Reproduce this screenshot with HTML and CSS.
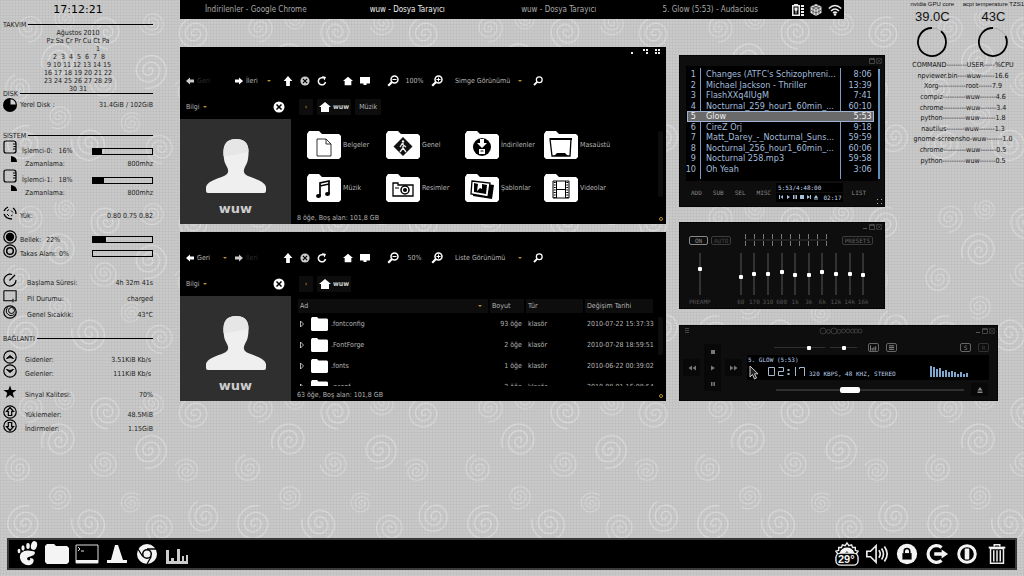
FILE: index.html
```html
<!DOCTYPE html>
<html lang="tr">
<head>
<meta charset="utf-8">
<title>Masaüstü</title>
<link rel="stylesheet" href="styles.css">
</head>
<body>
<svg class="defs" aria-hidden="true">
  <symbol id="arrow" viewBox="0 0 8 8"><path d="M0 4 4 0.500V2.500H8V5.500H4V7.500Z"/></symbol>
  <symbol id="up" viewBox="0 0 8 8"><path d="M4 0 7.500 4H5.500V8H2.500V4H0.500Z"/></symbol>
  <symbol id="close" viewBox="0 0 12 12"><circle cx="6" cy="6" r="5.500"/><path d="M3.500 3.500 8.500 8.500M8.500 3.500 3.500 8.500" stroke="#000" stroke-width="1.500"/></symbol>
  <symbol id="reload" viewBox="0 0 10 10"><path d="M8.500 6A3.600 3.600 0 1 1 6 1.800" fill="none" stroke="currentColor" stroke-width="1.500"/><path d="M5 0 9 1 7.500 4.500Z"/></symbol>
  <symbol id="home" viewBox="0 0 12 10"><path d="M6 0 12 5H10V10H2V5H0Z"/></symbol>
  <symbol id="screen" viewBox="0 0 10 9"><path d="M0 0.500H10V7H6.500V8.500H3.500V7H0Z"/></symbol>
  <symbol id="lens" viewBox="0 0 12 12"><circle cx="7.500" cy="4.500" r="3.500" fill="none" stroke="currentColor" stroke-width="1.500"/><path d="M5 7 1.200 10.800" stroke="currentColor" stroke-width="2.200"/></symbol>
  <symbol id="minus" viewBox="0 0 12 12"><use href="#lens"/><path d="M5.500 4H9.500V5H5.500Z"/></symbol>
  <symbol id="plus" viewBox="0 0 12 12"><use href="#lens"/><path d="M5.500 4H9.500V5H5.500ZM7 2.500H8V6.500H7Z"/></symbol>
  <symbol id="folder" viewBox="0 0 34 28"><path d="M0 3 2 0H12L15 3H32L34 5V26L32 28H2L0 26Z"/></symbol>
  <symbol id="user" viewBox="0 0 60 54"><path d="M30 0C40 0 43 6 42.500 15C42 23 41 24 38.500 29C37 33 38 35 42 37C50 40 59 43 60 48V52Q60 54 58 54H2Q0 54 0 52V48C1 43 10 40 18 37C22 35 23 33 21.500 29C19 24 18 23 17.500 15C17 6 20 0 30 0Z" fill="#efefef"/><path d="M17.500 17C26 17 34 14 42.500 13C43 4 38 0 30 0S16.500 5 17.500 17Z" fill="#e6e6e6"/></symbol>
  <symbol id="cpu" viewBox="0 0 15 23"><path d="M2.500 1H10.500Q13 1 13 3.500V11Q13 13 10.500 13H3Q1 13 1 11V3Q1 1 3 1Z" fill="none" stroke="#000" stroke-width="1.200"/><path d="M10 4H13M10.500 6.500H13M10 9H13" stroke="#000"/><path d="M8 16Q14 17 14 22H8Z"/></symbol>
  <symbol id="ring" viewBox="0 0 14 14"><circle cx="7" cy="7" r="6.200" fill="none" stroke="#000" stroke-width="1.200"/></symbol>
  <symbol id="min" viewBox="0 0 6 6"><path d="M1 4.500H5" fill="none" stroke="#555"/></symbol>
  <symbol id="max" viewBox="0 0 6 6"><path d="M.5 .5H5.500V5.500H.5ZM.5 1.500H5.500" fill="none" stroke="#444"/></symbol>
  <symbol id="x" viewBox="0 0 6 6"><path d="M.5 .5H5.500V5.500H.5ZM1 1 5 5M5 1 1 5" fill="none" stroke="#3c3c3c" stroke-width=".8"/></symbol>
</svg>

<svg class="wallpaper" aria-hidden="true">
  <defs>
    <g id="swirl"><path d="M0 0a2 2 0 0 1 4 0a4 4 0 0 1-8 0a6.500 6.500 0 0 1 13 0a9 9 0 0 1-18 0a11.500 11.500 0 0 1 23 0a14 14 0 0 1-14 14"/></g>
    <pattern id="swirls" width="230" height="190" patternUnits="userSpaceOnUse">
      <g fill="none" stroke="#d9d9d9" stroke-width="1.200">
        <use href="#swirl" transform="translate(28 28)"/>
        <use href="#swirl" transform="translate(66 18) rotate(120) scale(.8)"/>
        <use href="#swirl" transform="translate(108 32) scale(-1.200 1.200)"/>
        <use href="#swirl" transform="translate(152 22) rotate(70) scale(.9)"/>
        <use href="#swirl" transform="translate(196 34) rotate(200) scale(1.200)"/>
        <use href="#swirl" transform="translate(60 62) rotate(250) scale(1.300 -1.300)"/>
        <use href="#swirl" transform="translate(20 88) rotate(160)"/>
        <use href="#swirl" transform="translate(104 82) rotate(80)"/>
        <use href="#swirl" transform="translate(148 70) rotate(10) scale(1.300)"/>
        <use href="#swirl" transform="translate(186 92) rotate(300) scale(.9 -.9)"/>
        <use href="#swirl" transform="translate(58 116) rotate(30) scale(.9)"/>
        <use href="#swirl" transform="translate(26 144) rotate(190) scale(1.300)"/>
        <use href="#swirl" transform="translate(90 142) rotate(100) scale(1.300)"/>
        <use href="#swirl" transform="translate(132 124) rotate(220) scale(.8)"/>
        <use href="#swirl" transform="translate(162 148) scale(-1.100 1.100)"/>
        <use href="#swirl" transform="translate(206 136) rotate(150) scale(1.200)"/>
      </g>
    </pattern>
    <pattern id="mesh" width="3" height="3" patternUnits="userSpaceOnUse"><path d="M0 .5H3M.5 0V3" stroke="#000" stroke-opacity=".03"/></pattern>
  </defs>
  <rect width="100%" height="100%" fill="url(#swirls)"/>
  <rect width="100%" height="100%" fill="url(#mesh)"/>
</svg>

<div class="desktop">
<aside class="system">
  <time class="clock">17:12:21</time>
  <h2>TAKVIM</h2>
  <div class="calendar">
    <span>Ağustos 2010</span><span>Pz Sa Çr Pr Cu Ct Pa</span><span>                    1</span><span> 2  3  4  5  6  7  8</span><span> 9 10 11 12 13 14 15</span><span>16 17 18 19 20 21 22</span><span>23 24 25 26 27 28 29</span><span>30 31</span>
  </div>
  <h2>DISK</h2>
  <div class="stat disk"><svg viewBox="0 0 14 14"><circle cx="7" cy="7" r="7"/><path d="M7.500 1.200A6 6 0 0 1 12.800 6.500H7.500Z" fill="#d0d0d0"/></svg><span>Yerel Disk :</span><b>31.4GiB / 102GiB</b></div>
  <h2>SISTEM</h2>
  <div class="cpu"><svg><use href="#cpu"/></svg><div><p><label for="c0">İşlemci-0:</label><i>16%</i><progress id="c0" max="100" value="16"></progress></p><p class="inset"><span>Zamanlama:</span><b>800mhz</b></p></div></div>
  <div class="cpu"><svg><use href="#cpu"/></svg><div><p><label for="c1">İşlemci-1:</label><i>18%</i><progress id="c1" max="100" value="18"></progress></p><p class="inset"><span>Zamanlama:</span><b>800mhz</b></p></div></div>
  <div class="stat load"><svg viewBox="0 0 14 14"><path d="M1 5A7 7 0 0 1 5 1M1 8Q3 13 9 13M10 2Q13 4 13 8" fill="none" stroke="#000" stroke-width="1.300"/><path d="M4 5 6 3.500M4 8 6 10M8 4.500 10 6.500M9.500 9 8 10" stroke="#000"/></svg><span>Yük:</span><b>0.80 0.75 0.82</b></div>
  <div class="stat memory"><svg viewBox="0 0 14 14"><use href="#ring"/><circle cx="7" cy="7" r="4.200"/></svg><label for="ram">Bellek:</label><i>22%</i><progress id="ram" max="100" value="22"></progress></div>
  <div class="stat"><svg viewBox="0 0 14 14"><use href="#ring"/><circle cx="7" cy="7" r="3.300" fill="none" stroke="#000" stroke-width="1.500"/></svg><label for="swap">Takas Alanı: 0%</label><progress id="swap" max="100" value="0"></progress></div>
  <div class="stat uptime far"><svg viewBox="0 0 14 14"><path d="M9 1.500A6 6 0 1 0 13 7M6.500 7.500 12 2" fill="none" stroke="#000" stroke-width="1.200"/></svg><span>Başlama Süresi:</span><b>4h 32m 41s</b></div>
  <div class="stat power far"><svg viewBox="0 0 16 14"><path d="M1 1H15V12.500H13M1 1V12.500H11M11.500 10V14" fill="none" stroke="#000" stroke-width="1.200"/></svg><span>Pil Durumu:</span><b>charged</b></div>
  <div class="stat power far"><svg viewBox="0 0 14 14"><use href="#ring"/><circle cx="8.500" cy="5.500" r="3" fill="none" stroke="#000"/><path d="M4.500 2.500Q1 8 7 10.500Q10 11 11.500 9" fill="none" stroke="#000"/></svg><span>Genel Sıcaklık:</span><b>43°C</b></div>
  <h2>BAĞLANTI</h2>
  <div class="stat net mid"><svg viewBox="0 0 14 14"><use href="#ring"/><path d="M3.500 8.500 7 5.500 10.500 8.500 7 7.500Z" stroke="#000"/></svg><span>Gidenler:</span><b>3.51KiB Kb/s </b></div>
  <div class="stat mid"><svg viewBox="0 0 14 14"><use href="#ring"/><path d="M3.500 5.500 7 8.500 10.500 5.500 7 6.500Z" stroke="#000"/></svg><span>Gelenler:</span><b>111KiB Kb/s </b></div>
  <div class="stat net mid"><svg viewBox="0 0 14 14"><path d="M7 0.500 8.700 5H13.500L9.700 8 11.200 13 7 10 2.800 13 4.300 8 0.500 5H5.300Z"/></svg><span>Sinyal Kalitesi:</span><b>70%</b></div>
  <div class="stat total mid"><svg viewBox="0 0 14 14"><use href="#ring"/><path d="M7 2.500 10.500 6.500H8.700V10.500H5.300V6.500H3.500Z" fill="none" stroke="#000" stroke-width="1.200"/></svg><span>Yüklemeler:</span><b>48.5MiB</b></div>
  <div class="stat mid"><svg viewBox="0 0 14 14"><use href="#ring"/><path d="M7 11.500 10.500 7.500H8.700V3.500H5.300V7.500H3.500Z" fill="none" stroke="#000" stroke-width="1.200"/></svg><span>İndirmeler:</span><b>1.15GiB</b></div>
</aside>

<header class="taskbar">
  <nav><button>İndirilenler - Google Chrome</button><button class="active">wuw - Dosya Tarayıcı</button><button>wuw - Dosya Tarayıcı</button><button>5. Glow (5:53) - Audacious</button></nav>
  <div class="tray">
    <svg viewBox="0 0 12 12"><path d="M0 1H2V0H6V1H8V12H0ZM9 1H12V3H9ZM9 4H12V6H9ZM9 7H12V9H9ZM9 10H12V12H9Z" fill="#eee"/><path d="M1.500 2.500H6.500V10.500H1.500Z" fill="#000"/><path d="M2.500 3.500H5.500V6L4.500 7V9.500H3.500V7L2.500 6Z" fill="#eee"/></svg>
    <svg viewBox="0 0 12 12"><path d="M6 0 11.500 2.500V9L6 12 .5 9V2.500Z" fill="#ddd"/><path d="M.5 2.500 6 5.500 11.500 2.500M6 5.500V12M3 1.500 9 4V10M9 1.500 3 4V10M.5 6 6 9 11.500 6" fill="none" stroke="#000" stroke-width=".5"/></svg>
    <svg class="wifi" viewBox="0 0 14 12"><path d="M.8 4.500Q7-1.500 13.200 4.500M3 7Q7 3 11 7M5 9Q7 7.200 9 9" fill="none" stroke="#eee" stroke-width="1.500"/><circle cx="7" cy="10.500" r="1.300" fill="#eee"/></svg>
  </div>
</header>

<aside class="monitor">
  <div class="gauges">
    <div><span>nvidia GPU core</span><strong>39.0C</strong><svg viewBox="0 0 30 30"><circle cx="15" cy="15" r="14" fill="none" stroke="#aaa"/><path d="M24 4.300A14 14 0 1 1 15 1" fill="none" stroke="#000" stroke-width="1.800"/></svg></div>
    <div><span>acpi temperature TZS1</span><strong>43C</strong><svg viewBox="0 0 30 30"><circle cx="15" cy="15" r="14" fill="none" stroke="#aaa"/><path d="M27.500 9A14 14 0 1 1 15 1" fill="none" stroke="#000" stroke-width="1.800"/></svg></div>
  </div>
  <div class="processes"><span>COMMAND---------USER-----%CPU</span><span>npviewer.bin----wuw------16.6</span><span>Xorg------------root------7.9</span><span>compiz----------wuw-------4.6</span><span>chrome----------wuw-------3.4</span><span>python----------wuw-------1.8</span><span>nautilus--------wuw-------1.3</span><span>gnome-screensho-wuw-------1.0</span><span>chrome----------wuw-------0.5</span><span>python----------wuw-------0.5</span></div>
</aside>

<section class="files files-icons">
  <div class="caption"><svg viewBox="0 0 30 6"><path d="M1 3H3V5H1ZM13 0H15V2H13ZM16 0H18V2H16ZM16 3H18V5H16ZM25 0H27V2H25ZM28 0H30V2H28ZM25 3H27V5H25ZM28 3H30V5H28Z" fill="#eee"/></svg></div>
  <div class="toolbar">
    <button class="nav" disabled><svg><use href="#arrow"/></svg>Geri</button>
    <button class="nav forward"><svg><use href="#arrow"/></svg>İleri<span class="caret"></span></button>
    <button class="tool" aria-label="Yukarı"><svg><use href="#up"/></svg></button><button class="tool dim" aria-label="Durdur"><svg><use href="#close"/></svg></button><button class="tool" aria-label="Yenile"><svg><use href="#reload"/></svg></button>
    <button class="tool split" aria-label="Ev"><svg><use href="#home"/></svg></button><button class="tool" aria-label="Bilgisayar"><svg><use href="#screen"/></svg></button>
    <button class="tool zoom split" aria-label="Uzaklaş"><svg><use href="#minus"/></svg></button><span class="percent">100%</span><button class="tool zoom" aria-label="Yakınlaş"><svg><use href="#plus"/></svg></button>
    <span class="view"><select aria-label="Görünüm"><option>Simge Görünümü</option></select><span class="caret"></span></span>
    <button class="tool" aria-label="Ara"><svg><use href="#lens"/></svg></button>
  </div>
  <div class="panes">
    <aside class="info"><div class="pane-bar"><button>Bilgi<span class="caret"></span></button><button class="shut" aria-label="Kapat"><svg><use href="#close"/></svg></button></div><div class="profile"><svg><use href="#user"/></svg><strong>wuw</strong></div></aside>
    <main>
      <div class="path"><button class="prev">‹</button><button class="place"><svg><use href="#home"/></svg><b>wuw</b></button><button>Müzik</button></div>
      <div class="folders">
        <a href="#belgeler"><svg viewBox="0 0 34 28"><use href="#folder"/><path d="M10 8H19L24 13V25H10ZM19 8V13H24" fill="none" stroke="#000" stroke-width=".8"/></svg>Belgeler</a>
        <a href="#genel"><svg viewBox="0 0 34 28"><use href="#folder"/><path d="M17 6 26.500 15.500 17 25 7.500 15.500Z" fill="#111"/><circle cx="17" cy="10.500" r="1.200" fill="#eee"/><path d="M17 12V17L14 21M17 17 20 21M14 16 16 13 20 16" fill="none" stroke="#eee" stroke-width="1.300"/></svg>Genel</a>
        <a href="#indirilenler"><svg viewBox="0 0 34 28"><use href="#folder"/><circle cx="17" cy="16" r="9" fill="#000"/><path d="M15 8H19V12H22L17 17 12 12H15Z" fill="#fff"/><path d="M14 18H20V23H14Z" fill="#fff"/><path d="M15.500 20H18.500" stroke="#000"/></svg>İndirilenler</a>
        <a href="#masaustu"><svg viewBox="0 0 34 28"><use href="#folder"/><path d="M6 8H27L26 25H8Z" fill="none" stroke="#000" stroke-width="1.300"/><path d="M6 7H28V9H6ZM10 25 13 22H21L24 25Z"/></svg>Masaüstü</a>
        <a href="#muzik"><svg viewBox="0 0 34 28"><use href="#folder"/><path d="M13 22V9L22 7V20M13 12 22 10" fill="none" stroke="#000" stroke-width="1.700"/><ellipse cx="11.500" cy="22" rx="2.500" ry="2"/><ellipse cx="20.500" cy="20" rx="2.500" ry="2"/></svg>Müzik</a>
        <a href="#resimler"><svg viewBox="0 0 34 28"><use href="#folder"/><path d="M7 11V9H12V11H27V22H7Z" fill="none" stroke="#000" stroke-width="1.300"/><circle cx="19" cy="16" r="4" fill="none" stroke="#000" stroke-width="1.500"/><circle cx="19" cy="16" r="2"/><path d="M9 14H13" stroke="#000"/></svg>Resimler</a>
        <a href="#sablonlar"><svg viewBox="0 0 34 28"><use href="#folder"/><path d="M9 8 29 11 27 25 8 22Z"/><path d="M7 7 25 9 23 23 6 20Z" fill="#fff" stroke="#000" stroke-width="1.300"/><path d="M9 9 13 10 12 17 15 14 17 15V10L22 11 21 20 9 18Z"/></svg>Şablonlar</a>
        <a href="#videolar"><svg viewBox="0 0 34 28"><use href="#folder"/><path d="M9 7H25V24H9ZM12.500 7V24M21.500 7V24M12.500 15.500H21.500" fill="none" stroke="#000"/><path d="M10.700 8V24M23.300 8V24" stroke="#000" stroke-width="2" stroke-dasharray="1 1.500"/></svg>Videolar</a>
        <span class="scroll"></span>
      </div>
      <footer>8 öğe, Boş alan: 101,8 GB<i></i></footer>
    </main>
  </div>
</section>

<section class="files files-list">
  <div class="caption"></div>
  <div class="toolbar">
    <button class="nav"><svg><use href="#arrow"/></svg>Geri<span class="caret"></span></button>
    <button class="nav forward" disabled><svg><use href="#arrow"/></svg>İleri</button>
    <button class="tool" aria-label="Yukarı"><svg><use href="#up"/></svg></button><button class="tool dim" aria-label="Durdur"><svg><use href="#close"/></svg></button><button class="tool" aria-label="Yenile"><svg><use href="#reload"/></svg></button>
    <button class="tool split" aria-label="Ev"><svg><use href="#home"/></svg></button><button class="tool" aria-label="Bilgisayar"><svg><use href="#screen"/></svg></button>
    <button class="tool zoom split" aria-label="Uzaklaş"><svg><use href="#minus"/></svg></button><span class="percent">50%</span><button class="tool zoom" aria-label="Yakınlaş"><svg><use href="#plus"/></svg></button>
    <span class="view"><select aria-label="Görünüm"><option>Liste Görünümü</option></select><span class="caret"></span></span>
    <button class="tool" aria-label="Ara"><svg><use href="#lens"/></svg></button>
  </div>
  <div class="panes">
    <aside class="info"><div class="pane-bar"><button>Bilgi<span class="caret"></span></button><button class="shut" aria-label="Kapat"><svg><use href="#close"/></svg></button></div><div class="profile"><svg><use href="#user"/></svg><strong>wuw</strong></div></aside>
    <main>
      <div class="path"><button class="prev">‹</button><button class="place"><svg><use href="#home"/></svg><b>wuw</b></button></div>
      <div class="list">
        <table>
          <thead><tr><th class="name">Ad<span class="caret"></span></th><th class="size">Boyut</th><th class="kind">Tür</th><th>Değişim Tarihi</th></tr></thead>
          <tbody>
            <tr><td><div class="entry"><svg class="twist" viewBox="0 0 4 8"><path d="M.5 1V7L3.500 4Z" fill="none" stroke="#ddd" stroke-width=".8"/></svg><svg><use href="#folder"/></svg>.fontconfig</div></td><td class="num">93 öğe</td><td>klasör</td><td>2010-07-22 15:37:33</td></tr>
            <tr><td><div class="entry"><svg class="twist" viewBox="0 0 4 8"><path d="M.5 1V7L3.500 4Z" fill="none" stroke="#ddd" stroke-width=".8"/></svg><svg><use href="#folder"/></svg>.FontForge</div></td><td class="num">2 öğe</td><td>klasör</td><td>2010-07-28 18:59:51</td></tr>
            <tr><td><div class="entry"><svg class="twist" viewBox="0 0 4 8"><path d="M.5 1V7L3.500 4Z" fill="none" stroke="#ddd" stroke-width=".8"/></svg><svg><use href="#folder"/></svg>.fonts</div></td><td class="num">1 öğe</td><td>klasör</td><td>2010-06-22 00:39:02</td></tr>
            <tr><td><div class="entry"><svg class="twist" viewBox="0 0 4 8"><path d="M.5 1V7L3.500 4Z" fill="none" stroke="#ddd" stroke-width=".8"/></svg><svg><use href="#folder"/></svg>.gconf</div></td><td class="num">2 öğe</td><td>klasör</td><td>2010-08-01 16:08:54</td></tr>
          </tbody>
        </table>
        <span class="scroll"></span>
      </div>
      <footer>63 öğe, Boş alan: 101,8 GB<i></i></footer>
    </main>
  </div>
</section>

<section class="skin playlist">
  <div class="skin-bar"><svg><use href="#max"/></svg><svg><use href="#x"/></svg></div>
  <div class="tracks">
    <ol>
      <li><i>1</i><span>Changes (ATFC's Schizophreni...</span><b>8:06</b></li>
      <li><i>2</i><span>Michael Jackson - Thriller</span><b>13:39</b></li>
      <li><i>3</i><span>FlashXXq4lUgM</span><b>7:41</b></li>
      <li><i>4</i><span>Nocturnal_259_hour1_60min_...</span><b>60:10</b></li>
      <li class="playing"><i>5</i><span>Glow</span><b>5:53</b></li>
      <li><i>6</i><span>CireZ Orj</span><b>9:18</b></li>
      <li><i>7</i><span>Matt_Darey_-_Nocturnal_Suns...</span><b>59:59</b></li>
      <li><i>8</i><span>Nocturnal_256_hour1_60min_...</span><b>60:06</b></li>
      <li><i>9</i><span>Nocturnal 258.mp3</span><b>59:58</b></li>
      <li><i>10</i><span>Oh Yeah</span><b>3:06</b></li>
    </ol>
    <div class="track-scroll"></div>
  </div>
  <div class="commands">
    <button>ADD</button><button>SUB</button><button>SEL</button><button>MISC</button>
    <div class="totals"><span>5:53/4:48:00</span><span><svg viewBox="0 0 42 6"><path d="M1 1H2V5H1ZM5 1V5L2.500 3ZM9 1 12 3 9 5ZM15 1H16.500V5H15ZM17.500 1H19V5H17.500ZM22 1H26V5H22ZM29 1 32 3 29 5ZM32 1H33V5H32ZM36 4 38 1 40 4ZM36 4.500H40V5.500H36Z" fill="#a8bfdc"/></svg>02:17</span></div>
    <button class="list-button">LIST</button>
  </div>
  <svg class="grip" viewBox="0 0 6 6"><path d="M0 0H1V1H0ZM4 0H5V1H4ZM0 4H1V5H0ZM4 4H5V5H4Z" fill="#aaa"/></svg>
</section>

<section class="skin equalizer">
  <div class="skin-bar"><svg><use href="#min"/></svg><svg><use href="#max"/></svg><svg><use href="#x"/></svg></div>
  <div class="eq-top"><button class="lit">ON</button><button>AUTO</button><svg viewBox="0 0 84 12"><path d="M1 6H83" stroke="#333"/><path d="M1.500 0V5M10.500 0V5M19.500 0V5M28.500 0V5M37.500 0V5M46.500 0V5M55.500 0V5M64.500 0V5M73.500 0V5M82.500 0V5M1.500 7V12M10.500 7V12M19.500 7V12M28.500 7V12M37.500 7V12M46.500 7V12M55.500 7V12M64.500 7V12M73.500 7V12M82.500 7V12" stroke="#777"/></svg><button class="presets">PRESETS</button></div>
  <div class="bands">
    <label class="preamp"><input type="range" value="63">PREAMP</label>
    <div><label><input type="range" value="43">60</label><label><input type="range" value="50">170</label><label><input type="range" value="50">310</label><label><input type="range" value="55">600</label><label><input type="range" value="47">1k</label><label><input type="range" value="47">3k</label><label><input type="range" value="55">6k</label><label><input type="range" value="50">12k</label><label><input type="range" value="50">14k</label><label><input type="range" value="47">16k</label></div>
  </div>
</section>

<section class="skin player">
  <div class="player-bar"><svg viewBox="0 0 6 6"><path d="M1 1.500H5M1 3.500H5M1 5.500H5" stroke="#444"/></svg><svg class="brand" viewBox="0 0 44 8"><g fill="none" stroke="#444" stroke-width=".8"><circle cx="4" cy="4" r="3"/><circle cx="9.500" cy="4.500" r="2"/><circle cx="15" cy="4" r="3"/><circle cx="20" cy="4.500" r="2"/><circle cx="24.500" cy="4" r="2"/><circle cx="29" cy="4" r="2"/><circle cx="33.500" cy="4" r="2"/><circle cx="37" cy="4" r="2"/><circle cx="41" cy="4" r="2"/></g></svg><div class="skin-bar"><svg><use href="#min"/></svg><svg><use href="#max"/></svg><svg><use href="#x"/></svg></div></div>
  <div class="player-body">
    <div class="pad">
      <button class="stop" aria-label="Dur"><svg viewBox="0 0 8 6"><path d="M2 1H6V5H2Z"/></svg></button>
      <button class="back" aria-label="Önceki"><svg viewBox="0 0 8 6"><path d="M4 0.500V5.500L.5 3ZM8 .5V5.500L4.500 3Z"/></svg></button>
      <button class="play" aria-label="Çal"><svg viewBox="0 0 8 6"><path d="M2 .5 6 3 2 5.500Z"/></svg></button>
      <button class="next" aria-label="Sonraki"><svg viewBox="0 0 8 6"><path d="M0 .5 3.500 3 0 5.500ZM4 .5 7.500 3 4 5.500Z"/></svg></button>
      <button class="pause" aria-label="Duraklat"><svg viewBox="0 0 8 6"><path d="M2 1H3.500V5H2ZM4.500 1H6V5H4.500Z"/></svg></button>
    </div>
    <div class="deck">
      <div class="levels"><input class="volume" type="range" value="71" aria-label="Ses"><input class="balance" type="range" value="50" aria-label="Denge"><button aria-label="EQ"><svg viewBox="0 0 8 6"><path d="M.5 0V6M2.500 3V6M4.500 2V6M6.500 1V6" stroke="#999"/></svg></button><button aria-label="Liste"><svg viewBox="0 0 8 6"><path d="M1 .5H7M1 2.500H7M1 4.500H7" stroke="#999"/></svg></button><button class="shuffle">S</button><button class="repeat">R</button></div>
      <div class="display"><span class="song">5. GLOW (5:53)</span><div><svg class="elapsed" role="img" aria-label="02:17" viewBox="0 0 39 11"><g fill="none" stroke="#a9b9cc"><path d="M1.500 1.500H7.500V9.500H1.500ZM11.500 1.500H16.500V5.500H11.500V9.500H16.500M28.500 1V10M32.500 3V1.500H37.500V10"/><path d="M21.500 3V5M21.500 7V9" stroke-width="2"/></g></svg><span class="rate">320 KBPS, 48 KHZ, STEREO</span><svg class="spectrum" viewBox="0 0 40 11"><path d="M0 11V0H2V11ZM3 11V1H5V11ZM6 11V3H8V11ZM9 11V2H11V11ZM12 11V5H14V11ZM15 11V4H17V11ZM18 11V6H20V11ZM21 11V5H23V11ZM24 11V6H26V11ZM27 11V8H29V11ZM30 11V6H32V11ZM33 11V8H35V11ZM36 11V7H38V11Z" fill="#7fa6cf"/></svg></div></div>
      <div class="seek"><input type="range" value="38" aria-label="Konum"><button aria-label="Çıkar"><svg viewBox="0 0 8 6"><path d="M1.500 3.500 4 0 6.500 3.500ZM1.500 4.500H6.500V6H1.500Z"/></svg></button></div>
    </div>
  </div>
</section>
<svg class="cursor" viewBox="0 0 10 15"><path d="M1 1V12L3.500 9.500 5.500 14 7.500 13 5.500 8.800H9Z" fill="#222" stroke="#ccc"/></svg>

<nav class="dock">
  <a href="#menu" aria-label="Menü"><svg viewBox="0 0 24 26"><path d="M17 10C10 8 4 11 5 17C6 23 13 26 17 23C20 20 19 17 15 17C16 20 13 20 12 18C12 15 19 16 20 12Q20 10 17 10Z"/><ellipse cx="19" cy="4.500" rx="3" ry="4.500" transform="rotate(15 19 4.500)"/><ellipse cx="13" cy="5" rx="1.800" ry="3"/><ellipse cx="8" cy="7" rx="1.600" ry="2.700"/><ellipse cx="4" cy="10" rx="1.400" ry="2.200"/></svg></a>
  <a href="#home-folder" aria-label="Ev"><svg viewBox="0 0 24 26"><path d="M0 5 2 3H9L11 5H22L24 7V21L22 23H2L0 21Z"/></svg></a>
  <a href="#terminal" aria-label="Uçbirim"><svg viewBox="0 0 24 26"><path d="M1 4H23V22H1Z" fill="#000" stroke="#ddd"/><path d="M1 19H23V22H1Z"/><path d="M3 6 5 8 3 10M6 10H9" fill="none" stroke="#ddd"/></svg></a>
  <a href="#cone" aria-label="Oynatıcı"><svg viewBox="0 0 24 26"><path d="M10 4H13L18 19H22V22H2V19H6Z"/></svg></a>
  <a href="#chrome" aria-label="Chrome"><svg viewBox="0 0 24 26"><circle cx="12" cy="13" r="10"/><circle cx="12" cy="13" r="5" fill="#000"/><circle cx="12" cy="13" r="3.500"/><path d="M12 8H21M7.700 15.500 3 8M16.300 15.500 12 23" stroke="#000" stroke-width="1.300"/></svg></a>
  <a href="#mixer" aria-label="Karıştırıcı"><svg viewBox="0 0 24 26"><path d="M1 23V9H4V20H6V17H9V20H12V8H15V20H17V15H19V20H21V14H23V23Z" fill="#ccc"/></svg></a>
  <span class="gap"></span>
  <a href="#weather"><svg viewBox="0 0 26 26"><path d="M3 13 1 10 4 9 4 6 7 6 8 3 11 4 13 1 15 4 18 3 19 6 22 6 22 9 25 10 23 13" fill="none" stroke="#eee" stroke-width="1.500"/><path d="M5 12Q7 6 13 6T21 12L17 14 13 10 8 14Z"/><rect x="1" y="12" width="24" height="13" rx="5" fill="#000" stroke="#eee" stroke-width="1.500"/></svg><b>29°</b></a>
  <a href="#sound" aria-label="Ses"><svg viewBox="0 0 26 26"><path d="M2 10H6L12 4V22L6 16H2Z" fill="none" stroke="#eee" stroke-width="1.800"/><path d="M15 9Q18 13 15 17M18 7Q22 13 18 19M21 5Q27 13 21 21" fill="none" stroke="#eee" stroke-width="1.800"/></svg></a>
  <a href="#lock" aria-label="Kilitle"><svg viewBox="0 0 26 26"><circle cx="13" cy="13" r="11"/><path d="M8 12H18V19H8Z" fill="#000"/><path d="M10 12V10Q10 7 13 7T16 10V12" fill="none" stroke="#000" stroke-width="1.700"/></svg></a>
  <a href="#logout" aria-label="Oturumu kapat"><svg viewBox="0 0 26 26"><path d="M18 6A9 9 0 1 0 18 20" fill="none" stroke="#f4f4f4" stroke-width="3.500"/><path d="M10 11H18V8L25 13 18 18V15H10Z"/></svg></a>
  <a href="#power" aria-label="Kapat"><svg viewBox="0 0 26 26"><circle cx="13" cy="13" r="9" fill="none" stroke="#f4f4f4" stroke-width="3.200"/><rect x="10.500" y="7" width="5" height="12" rx="1"/></svg></a>
  <a href="#trash" aria-label="Çöp"><svg viewBox="0 0 26 26"><path d="M6 7H20V23H6ZM9.500 9V21M13 9V21M16.500 9V21M10 5V3H16V5" fill="none" stroke="#eee" stroke-width="1.600"/><path d="M4 5H22V7H4Z"/></svg></a>
</nav>
</div>
</body>
</html>
```
FILE: styles.css
```css
* { box-sizing: border-box; }
body, h2, p, ol { margin: 0; padding: 0; }
body { background: #c9c9c9; font: 7px/8px "DejaVu Sans Condensed", "DejaVu Sans", sans-serif; color: #222; }
i { font-style: normal; }
a { color: inherit; text-decoration: none; }
button, select { border: 0; padding: 0; background: none; color: inherit; font: inherit; }
svg { display: block; flex: none; fill: currentColor; }
.defs { position: absolute; width: 0; height: 0; }
.wallpaper { position: absolute; inset: 0; width: 100%; height: 100%; }
.desktop { position: relative; min-height: 100vh; display: grid; grid-template: 1fr auto / 180px minmax(0, 664px) 1fr; overflow: hidden; }

/* System readouts */
.system { padding: 0 27px 0 3px; display: flex; flex-direction: column; color: #222; }
.clock { text-align: center; font: 11px/20px "DejaVu Sans", sans-serif; color: #000; }
.system h2 { display: flex; align-items: center; gap: 2px; height: 9px; font-size: 7px; font-weight: 400; }
.system h2::after { content: ""; flex: 1; height: 1px; background: #000; }
.calendar { display: grid; grid-auto-rows: 1fr; height: 60px; text-align: center; white-space: pre; }
.stat { display: flex; align-items: flex-end; height: 14px; gap: 3px; white-space: pre; }
.stat svg { width: 14px; height: 14px; color: #000; }
.stat b, .cpu b { margin-left: auto; font-weight: 400; }
.disk { margin-bottom: 19px; align-items: center; }
.cpu { display: flex; gap: 4px; height: 29px; }
.cpu svg { width: 15px; height: 23px; color: #000; }
.cpu div { flex: 1; padding-top: 6px; display: grid; gap: 3px; }
.cpu p { display: flex; align-items: center; height: 10px; gap: 6px; }
.cpu .inset { padding-left: 3px; }
.load { margin: 8px 0 10px; }
progress { margin-left: auto; appearance: none; width: 61px; height: 7px; border: 1px solid #000; background: none; }
progress::-webkit-progress-bar { background: none; }
progress::-webkit-progress-value { background: #000; }
.stat progress { margin-bottom: 1px; }
.memory i { margin-left: 2px; }
.uptime { margin-top: 15px; }
.power { margin-top: 2px; }
.power + h2 { margin-top: 15px; }
.far { gap: 10px; }
.mid { gap: 8px; }
.net { margin-top: 7px; }
.total { margin-top: 6px; }

/* Window list */
.taskbar { display: flex; align-self: start; height: 19px; background: #000; color: #aaa; font-size: 8px; }
.taskbar nav { flex: 1; display: grid; grid-template-columns: repeat(4, 1fr); }
.taskbar button { padding-top: 1px; }
.taskbar .active { color: #eee; }
.tray { width: 58px; display: flex; align-items: center; gap: 6px; padding-left: 6px; }
.tray svg { width: 12px; height: 12px; }
.tray .wifi { width: 14px; }

/* Temperatures and processes */
.monitor { justify-self: end; width: 122px; color: #111; }
.gauges { display: grid; grid-template-columns: 1fr 1fr; height: 60px; font: 6px/8px "Liberation Sans", sans-serif; white-space: nowrap; }
.gauges div { display: flex; flex-direction: column; align-items: center; }
.gauges strong { font-size: 13px; font-weight: 400; line-height: 18px; }
.gauges svg { width: 30px; height: 30px; margin-top: 1px; }
.processes { display: grid; grid-auto-rows: 1fr; height: 106px; text-align: center; align-items: center; }

/* File browser */
.files { position: absolute; left: 180px; width: 486px; background: #000; color: #b4b4b4; }
.files-icons { top: 47px; }
.files-list { top: 232px; }
.caption { height: 10px; padding: 2px 6px; }
.files-icons .caption { height: 18px; }
.caption svg { width: 30px; height: 6px; margin-left: auto; }
.toolbar { display: flex; align-items: center; height: 32px; padding-left: 6px; }
.toolbar svg { width: 10px; height: 10px; color: #fff; }
.nav { display: flex; align-items: center; gap: 3px; width: 49px; }
.toolbar .nav svg { width: 8px; height: 8px; }
.forward { width: 44px; }
.forward svg { transform: scaleX(-1); }
.nav:disabled { color: #2c2c2c; }
.nav:disabled svg { color: #ccc; }
.caret { border: 2px solid transparent; border-top-color: #b8902c; border-bottom: 0; }
.nav .caret { margin: 0 8px 0 auto; }
.tool { width: 17px; display: grid; justify-items: center; }
.toolbar .dim svg { color: #ccc; }
.split { margin-left: 9px; }
.zoom { width: 21px; }
.zoom svg { width: 12px; height: 12px; }
.percent { width: 23px; text-align: center; }
.view { display: flex; align-items: center; width: 67px; margin: 0 7px 0 8px; }
.view select { appearance: none; flex: 1; outline: 0; }
.panes { display: grid; grid-template-columns: 111px 1fr; }
.info { display: flex; flex-direction: column; }
.pane-bar { display: flex; justify-content: space-between; align-items: center; height: 22px; padding: 0 6px 2px; }
.pane-bar button { display: flex; align-items: center; gap: 3px; }
.pane-bar svg { width: 12px; height: 12px; color: #fff; }
.profile { background: #2f2f2f; height: 105px; padding-top: 20px; display: flex; flex-direction: column; align-items: center; }
.profile svg { width: 60px; height: 54px; }
.profile strong { font: bold 13px/32px "DejaVu Sans", sans-serif; color: #ccc; }
.panes main { display: flex; flex-direction: column; min-width: 0; }
.path { display: flex; gap: 4px; height: 22px; padding: 2px 0 4px 8px; }
.path button { padding: 0 4px; background: #0d0d0d; border-radius: 1px; }
.path .prev { width: 14px; color: #d8a830; }
.path .place { display: flex; align-items: center; gap: 2px; padding: 0 2px; color: #ccc; }
.path svg { width: 12px; height: 10px; color: #fff; }
.folders { position: relative; display: grid; grid-template-columns: repeat(4, 79px); row-gap: 15px; height: 92px; padding: 12px 0 0 16px; align-content: start; }
.folders a { display: flex; align-items: center; gap: 2px; height: 28px; }
.folders svg { width: 34px; height: 28px; color: #fff; }
.folders path:not([fill]), .folders ellipse, .folders circle:not([fill]) { fill: #000; }
.scroll { position: absolute; right: 3px; top: 12px; width: 5px; height: 66px; border-radius: 2px; background: #0d0d0d; }
.panes footer { display: flex; justify-content: space-between; align-items: center; height: 13px; padding: 0 3px 0 6px; }
.panes footer i { width: 4px; height: 4px; border: 1px solid #b8902c; border-radius: 2px; align-self: flex-end; margin-bottom: 3px; }
.list { position: relative; height: 90px; margin-bottom: 2px; overflow: hidden; padding-top: 3px; }
.list .scroll { top: 21px; height: 38px; }
table { border-collapse: separate; border-spacing: 2px 0; margin-left: 5px; table-layout: fixed; width: 359px; }
th { height: 14px; padding: 0 2px; background: #0d0d0d; text-align: left; font-weight: 400; }
td { height: 21px; padding: 0 2px; white-space: nowrap; }
.name { width: 190px; }
.name .caret { float: right; margin: 3px 4px; }
.size { width: 34px; }
.kind { width: 57px; }
.num { text-align: right; }
.entry { display: flex; align-items: center; gap: 3px; }
.entry svg { width: 17px; height: 14px; color: #fff; }
.entry .twist { width: 4px; height: 8px; margin-right: 4px; }

/* Media player windows */
.skin { position: absolute; background: #0e0e0e; border: 1px solid #050505; color: #555; font: 6px/7px "DejaVu Sans Mono", monospace; }
.skin-bar { display: flex; justify-content: flex-end; gap: 1px; padding: 1px 2px; }
.skin-bar svg { width: 6px; height: 6px; }
.playlist { left: 679px; top: 55px; width: 206px; height: 152px; }
.playlist .skin-bar { height: 10px; padding-top: 2px; }
.tracks { display: flex; justify-content: space-between; margin: 0 6px; padding: 2px 2px 2px 1px; height: 115px; background: #000; }
.tracks ol { flex: 1; display: grid; grid-template-rows: repeat(10, 1fr); height: 111px; padding: 1px 0 5px; list-style: none; font: 9px/10px "DejaVu Sans Condensed", sans-serif; color: #a3bcdc; background: linear-gradient(90deg, transparent 13px, #7f9cc4 13px 14px, transparent 14px 153px, #7f9cc4 153px 154px, transparent 154px); }
.tracks li { display: grid; grid-template-columns: 9px 1fr 28px; column-gap: 10px; align-items: center; white-space: nowrap; }
.tracks i { direction: rtl; }
.tracks b { font-weight: 400; text-align: right; padding-right: 2px; }
.playing { color: #f0f0f0; background: #6a6a6a; outline: 1px solid #9fb4d4; outline-offset: -1px; }
.track-scroll { width: 3px; margin: 1px 0 0 4px; border: 1px solid #5f8fb9; border-top: 13px solid #6fa0cc; }
.commands { display: flex; align-items: center; height: 22px; padding: 0 18px 0 11px; gap: 11px; color: #888; }
.totals { flex: 1; margin: 0 -2px 0 -6px; color: #c5d5ea; }
.totals span { display: flex; justify-content: space-between; align-items: center; height: 9px; padding: 0 2px; background: #000; }
.totals span + span { margin-top: 1px; padding-right: 1px; }
.totals svg { width: 42px; height: 6px; }
.grip { position: absolute; right: 1px; bottom: 1px; width: 6px; height: 6px; }

.equalizer { left: 679px; top: 222px; width: 206px; height: 87px; }
.eq-top { display: flex; align-items: center; gap: 3px; padding: 3px 11px 0 9px; }
.eq-top button, .levels button { height: 9px; border: 1px solid #3c3c3c; border-radius: 2px; padding: 0 2px; line-height: 7px; color: #4a4a4a; }
.eq-top .lit { width: 19px; color: #888; border-color: #888; }
.eq-top svg { width: 84px; height: 12px; margin: 0 auto 0 10px; }
.eq-top .presets { color: #666; }
.bands { display: flex; justify-content: space-between; padding: 7px 14px 0 9px; }
.bands div { display: grid; grid-template-columns: repeat(10, minmax(0, 1fr)); width: 136px; }
.bands label { display: flex; flex-direction: column; align-items: center; gap: 3px; }
input[type=range] { appearance: none; margin: 0; height: 4px; background: linear-gradient(#303030, #303030) center / 100% 1px no-repeat; }
input[type=range]::-webkit-slider-thumb { appearance: none; width: 4px; height: 4px; border-radius: 1px; background: #fff; }
.bands label input { writing-mode: vertical-lr; direction: rtl; width: 4px; height: 42px; background: linear-gradient(#333, #333) center / 2px 100% no-repeat; }

.player { left: 679px; top: 325px; width: 319px; height: 76px; }
.player-bar { display: grid; grid-template-columns: 1fr auto 1fr; padding: 1px 0 0 4px; height: 14px; }
.player-bar > svg { width: 6px; height: 6px; }
.player-bar .brand { width: 44px; height: 8px; }
.player-body { display: grid; grid-template-columns: 59px 1fr; gap: 5px; padding: 0 8px 0 3px; }
.pad { display: grid; grid-template: "a s b" 15px "l p r" 17px "c w d" 15px / 17px 17px 17px; column-gap: 4px; padding-top: 4px; color: #777; }
.pad button, .seek button { display: grid; place-items: center; background: #080808; }
.pad svg, .seek svg { width: 8px; height: 6px; }
.stop { grid-area: s; }
.back { grid-area: l; }
.play { grid-area: p; }
.next { grid-area: r; }
.pause { grid-area: w; }
.levels { display: flex; align-items: center; height: 15px; padding-left: 27px; }
.volume { width: 51px; }
.levels .balance { width: 27px; margin: 0 11px 0 5px; }
.levels button { width: 11px; color: #888; border-color: #666; padding: 0 1px; }
.levels button + button { margin-left: 7px; }
.levels svg { width: 7px; height: 6px; }
.levels .shuffle { margin-left: auto; }
.levels .repeat { color: #444; border-color: #333; }
.display { height: 25px; padding: 1px 19px 0 1px; background: #000; color: #b9cfe8; }
.display div { display: flex; align-items: flex-end; gap: 3px; padding: 3px 0 0 19px; }
.song { display: block; }
.elapsed { width: 39px; height: 11px; }
.spectrum { width: 40px; height: 11px; margin-left: auto; }
.seek { display: flex; justify-content: space-between; align-items: center; height: 19px; padding: 0 1px 0 29px; color: #888; }
.seek input { width: 188px; height: 6px; background-size: 100% 2px; }
.seek input::-webkit-slider-thumb { width: 20px; height: 6px; border-radius: 2px; }
.seek button { width: 17px; height: 13px; }
.cursor { position: absolute; left: 749px; top: 365px; width: 10px; height: 15px; }

/* Dock */
.dock { grid-column: 1 / -1; grid-row: 2; position: relative; display: flex; align-items: center; gap: 6px; margin: 0 7px 6px; height: 32px; padding: 0 6px; background: #000; border: 2px solid #3a3a3a; color: #f4f4f4; }
.dock a { position: relative; }
.dock svg { width: 24px; height: 26px; }
.gap { flex: 1; }
.dock b { position: absolute; left: 3px; bottom: 1px; font: bold 11px/13px "Liberation Sans", sans-serif; }
```
